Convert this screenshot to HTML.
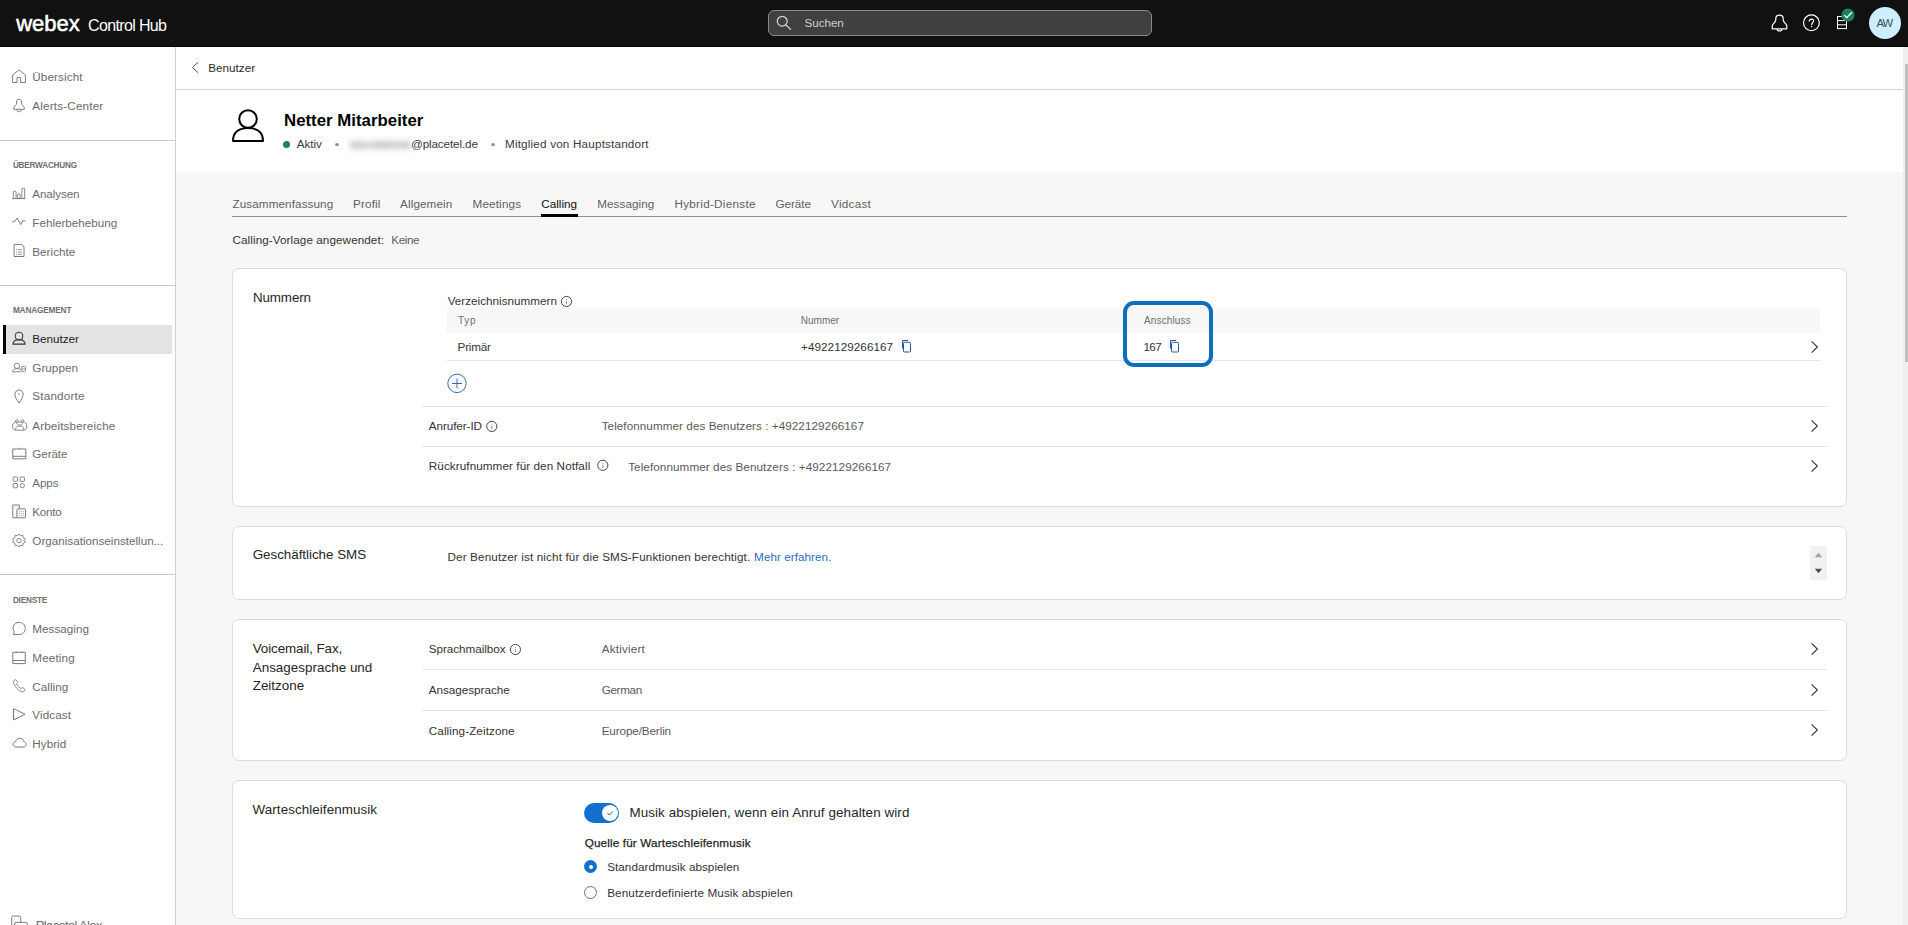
<!DOCTYPE html>
<html><head><meta charset="utf-8"><title>Webex Control Hub</title>
<style>
html,body{margin:0;padding:0;}
body{width:1908px;height:925px;overflow:hidden;position:relative;background:#f7f7f7;font-family:"Liberation Sans",sans-serif;}
.t{position:absolute;white-space:nowrap;}
.r{position:absolute;box-sizing:border-box;}
</style></head><body>
<div class="r" style="left:0px;top:0px;width:1908px;height:47px;background:#111111;"></div>
<div class="r" style="left:0px;top:46px;width:1908px;height:1px;background:#000000;"></div>
<div class="r" style="left:0px;top:47px;width:175px;height:878px;background:#ffffff;"></div>
<div class="r" style="left:175px;top:47px;width:1px;height:878px;background:#cfcfcf;"></div>
<div class="r" style="left:176px;top:47px;width:1727px;height:125px;background:#ffffff;"></div>
<div class="r" style="left:176px;top:89px;width:1727px;height:1px;background:#d4d4d4;"></div>
<div class="r" style="left:1903px;top:47px;width:5px;height:878px;background:#efefef;"></div>
<div class="r" style="left:1905px;top:64px;width:3px;height:298px;background:#c1c1c1;"></div>
<div class="t" style="left:16.24px;top:13px;font-size:22.00px;line-height:22.00px;color:#ffffff;letter-spacing:-0.011px;-webkit-text-stroke:0.55px #ffffff;">webex</div>
<div class="t" style="left:88.00px;top:18px;font-size:16.00px;line-height:16.00px;color:#ffffff;letter-spacing:-0.638px;">Control Hub</div>
<div class="r" style="left:768px;top:10px;width:384px;height:26px;background:#404040;border:1px solid #8a8a8a;border-radius:6px;"></div>
<svg class="r" style="left:775px;top:14px;" width="18" height="18" viewBox="0 0 18 18" fill="none"><circle cx="7.2" cy="7.2" r="4.9" stroke="#d8d8d8" stroke-width="1.2"/><path d="M10.8 10.8 L15.6 15.4" stroke="#d8d8d8" stroke-width="1.2" stroke-linecap="round"/></svg>
<div class="t" style="left:804.50px;top:17px;font-size:11.70px;line-height:11.70px;color:#cfcfcf;letter-spacing:-0.057px;">Suchen</div>
<svg class="r" style="left:1770px;top:13px;" width="19" height="20" viewBox="0 0 19 20" fill="none"><path d="M2.2 15.8 V12.8 C2.2 11.6 3.6 10.6 4.6 9.4 C5.4 8.4 5.8 7.6 5.8 6.4 V5.8 C5.8 3.6 7.4 2.2 9.5 2.2 C11.6 2.2 13.2 3.6 13.2 5.8 V6.4 C13.2 7.6 13.6 8.4 14.4 9.4 C15.4 10.6 16.8 11.6 16.8 12.8 V15.8 Z" stroke="#ffffff" stroke-width="1.2" stroke-linejoin="round"/><path d="M7.2 15.9 V16.4 C7.2 17.3 8.2 17.9 9.5 17.9 C10.8 17.9 11.8 17.3 11.8 16.4 V15.9" stroke="#ffffff" stroke-width="1.1"/></svg>
<svg class="r" style="left:1802px;top:14px;" width="19" height="18" viewBox="0 0 19 18" fill="none"><circle cx="9.4" cy="8.85" r="7.9" stroke="#ffffff" stroke-width="1.2"/><path d="M7.3 7.4 C7.3 6 8.2 5.2 9.5 5.2 C10.8 5.2 11.6 6 11.6 7.1 C11.6 8.6 9.6 8.9 9.6 10.7 V11.1" stroke="#ffffff" stroke-width="1.2"/><circle cx="9.6" cy="12.5" r="0.75" fill="#ffffff"/></svg>
<svg class="r" style="left:1835px;top:14px;" width="14" height="18" viewBox="0 0 14 18" fill="none"><rect x="2.5" y="2.5" width="9" height="12.1" stroke="#ffffff" stroke-width="1"/><path d="M2.5 6.6 H11.5 M2.5 10.8 H11.5" stroke="#ffffff" stroke-width="1"/></svg>
<svg class="r" style="left:1841px;top:8px;" width="14" height="14" viewBox="0 0 14 14" fill="none"><circle cx="7" cy="7" r="6.6" fill="#1d805f"/><path d="M3.2 7.1 L5.8 9.6 L10.9 4.3" stroke="#ffffff" stroke-width="1.3"/></svg>
<div class="r" style="left:1869px;top:7px;width:32px;height:32px;background:#cdeefc;border-radius:50%;"></div>
<div class="t" style="left:1876.60px;top:18px;font-size:11.20px;line-height:11.20px;color:#3b4a63;letter-spacing:-1.229px;">AW</div>
<div class="t" style="left:32.30px;top:71px;font-size:11.70px;line-height:11.70px;color:#6b6b6b;letter-spacing:0.110px;">Übersicht</div>
<svg class="r" style="left:12px;top:68px;" width="16" height="17" viewBox="0 0 16 17" fill="none"><path d="M0.6 14.5 V6.9 L6.5 2.3 H7.5 L13.4 6.9 V14.5 H8.6 V9.6 H5 V14.5 Z" stroke="#7a7a7a" stroke-width="1" stroke-linejoin="round"/></svg>
<div class="t" style="left:32.30px;top:100px;font-size:11.70px;line-height:11.70px;color:#6b6b6b;letter-spacing:0.173px;">Alerts-Center</div>
<svg class="r" style="left:12px;top:97px;" width="16" height="17" viewBox="0 0 16 17" fill="none"><path d="M1.8 12.3 V10.9 C1.8 9.7 3.6 8.7 4.3 7.5 L4.8 3.6 C4.9 2.9 5.5 2.5 6.2 2.5 H7.9 C8.6 2.5 9.2 2.9 9.3 3.6 L9.8 7.5 C10.5 8.7 12.3 9.7 12.3 10.9 V12.3 Z" stroke="#7a7a7a" stroke-width="1"/><path d="M5 12.4 V13.3 C5 14.1 5.6 14.6 6.4 14.6 H7.6 C8.4 14.6 9 14.1 9 13.3 V12.4" stroke="#7a7a7a" stroke-width="1"/></svg>
<div class="r" style="left:0px;top:140px;width:175px;height:1px;background:#c9c9c9;"></div>
<div class="t" style="left:12.90px;top:162px;font-size:8.20px;line-height:8.20px;color:#6e6e6e;letter-spacing:-0.206px;font-weight:bold;">ÜBERWACHUNG</div>
<div class="t" style="left:32.30px;top:188px;font-size:11.70px;line-height:11.70px;color:#6b6b6b;letter-spacing:-0.119px;">Analysen</div>
<svg class="r" style="left:12px;top:185px;" width="16" height="17" viewBox="0 0 16 17" fill="none"><path d="M0.3 13.6 H13.3" stroke="#7a7a7a" stroke-width="1"/><rect x="1.3" y="6.3" width="2.8" height="7.2" rx="0.6" stroke="#7a7a7a" stroke-width="0.9"/><rect x="5.6" y="8.8" width="2.5" height="4.7" rx="1.2" stroke="#7a7a7a" stroke-width="0.9"/><rect x="9.9" y="3.3" width="2.8" height="10.2" rx="0.6" stroke="#7a7a7a" stroke-width="0.9"/></svg>
<div class="t" style="left:32.30px;top:217px;font-size:11.70px;line-height:11.70px;color:#6b6b6b;letter-spacing:-0.009px;">Fehlerbehebung</div>
<svg class="r" style="left:12px;top:214px;" width="16" height="17" viewBox="0 0 16 17" fill="none"><path d="M0.3 8 L2.8 7.3 L5.1 4 L8.6 10.5 L10.9 6.9 H13.3" stroke="#7a7a7a" stroke-width="1" stroke-linejoin="round"/></svg>
<div class="t" style="left:32.30px;top:246px;font-size:11.70px;line-height:11.70px;color:#6b6b6b;letter-spacing:0.012px;">Berichte</div>
<svg class="r" style="left:12px;top:243px;" width="16" height="17" viewBox="0 0 16 17" fill="none"><path d="M2.1 1.4 H9.6 L12 3.9 V13.5 H2.1 Z" stroke="#7a7a7a" stroke-width="1" stroke-linejoin="round"/><path d="M4.1 6.6 H5 M4.1 9.1 H5 M4.1 11.4 H5 M6 6.6 H9.9 M6 9.1 H9.9 M6 11.4 H9.9" stroke="#7a7a7a" stroke-width="0.8"/></svg>
<div class="r" style="left:0px;top:285px;width:175px;height:1px;background:#c9c9c9;"></div>
<div class="t" style="left:12.90px;top:307px;font-size:8.20px;line-height:8.20px;color:#6e6e6e;letter-spacing:-0.119px;font-weight:bold;">MANAGEMENT</div>
<div class="r" style="left:6px;top:325px;width:166px;height:29px;background:#e3e3e3;"></div>
<div class="r" style="left:3px;top:325px;width:3px;height:29px;background:#000000;"></div>
<div class="t" style="left:32.30px;top:333px;font-size:11.70px;line-height:11.70px;color:#1f1f1f;letter-spacing:-0.032px;">Benutzer</div>
<svg class="r" style="left:12px;top:330px;" width="16" height="17" viewBox="0 0 16 17" fill="none"><circle cx="7" cy="6" r="3.9" stroke="#333" stroke-width="1"/><path d="M0.9 14.1 C1 11.6 3.2 9.9 5 9.9 H9 C10.8 9.9 13 11.6 13.1 14.1 Z" stroke="#333" stroke-width="1.1" stroke-linejoin="round"/></svg>
<div class="t" style="left:32.30px;top:362px;font-size:11.70px;line-height:11.70px;color:#6b6b6b;letter-spacing:0.027px;">Gruppen</div>
<svg class="r" style="left:12px;top:359px;" width="16" height="17" viewBox="0 0 16 17" fill="none"><circle cx="4.9" cy="6.8" r="2.7" stroke="#7a7a7a" stroke-width="0.9"/><path d="M0.4 12.8 C0.6 10.6 2.4 9.6 4.9 9.6 C6.6 9.6 7.8 10 8.5 10.8" stroke="#7a7a7a" stroke-width="0.9"/><path d="M0.4 12.8 H8.6" stroke="#7a7a7a" stroke-width="0.9"/><rect x="9.2" y="7.6" width="4.3" height="4.8" rx="1" stroke="#7a7a7a" stroke-width="0.9"/><path d="M9.2 10 H13.5" stroke="#7a7a7a" stroke-width="0.8"/></svg>
<div class="t" style="left:32.30px;top:390px;font-size:11.70px;line-height:11.70px;color:#6b6b6b;letter-spacing:0.184px;">Standorte</div>
<svg class="r" style="left:12px;top:387px;" width="16" height="17" viewBox="0 0 16 17" fill="none"><path d="M7 16 C4.8 12.8 2.9 10.2 2.9 7.2 C2.9 4.8 4.7 3 7 3 C9.3 3 11.1 4.8 11.1 7.2 C11.1 10.2 9.2 12.8 7 16 Z" stroke="#7a7a7a" stroke-width="1"/><circle cx="7" cy="7" r="0.8" fill="#7a7a7a"/></svg>
<div class="t" style="left:32.30px;top:420px;font-size:11.70px;line-height:11.70px;color:#6b6b6b;letter-spacing:0.129px;">Arbeitsbereiche</div>
<svg class="r" style="left:12px;top:417px;" width="16" height="17" viewBox="0 0 16 17" fill="none"><path d="M3.6 4.8 C3.6 3.2 4.2 2.6 4.9 2.6 C5.6 2.6 6.2 3.2 6.2 4.8 M9.2 4.8 C9.2 3.2 9.8 2.6 10.5 2.6 C11.2 2.6 11.8 3.2 11.8 4.8" stroke="#7a7a7a" stroke-width="0.9"/><path d="M0.5 9.5 C0.5 6.4 2 5 4.4 5 H10.9 C13.3 5 14.8 6.4 14.8 9.5 C14.8 12 13.2 13.2 11 13.2 H4.3 C2.1 13.2 0.5 12 0.5 9.5 Z" stroke="#7a7a7a" stroke-width="0.9"/><path d="M3.6 13.1 C3.6 10.6 4.6 9.1 5.8 9.1 H9.5 C10.7 9.1 11.7 10.6 11.7 13.1 M4.4 5 C4.8 7.2 6 8.1 7.65 8.1 C9.3 8.1 10.5 7.2 10.9 5" stroke="#7a7a7a" stroke-width="0.9"/></svg>
<div class="t" style="left:32.30px;top:448px;font-size:11.70px;line-height:11.70px;color:#6b6b6b;letter-spacing:-0.113px;">Geräte</div>
<svg class="r" style="left:12px;top:445px;" width="16" height="17" viewBox="0 0 16 17" fill="none"><path d="M0.8 4 H13.8 V13.8 H0.8 Z M0.8 11.3 H13.8" stroke="#7a7a7a" stroke-width="1" stroke-linejoin="round"/><path d="M7.3 2.6 V4" stroke="#7a7a7a" stroke-width="0.8"/></svg>
<div class="t" style="left:32.30px;top:477px;font-size:11.70px;line-height:11.70px;color:#6b6b6b;letter-spacing:-0.121px;">Apps</div>
<svg class="r" style="left:12px;top:474px;" width="16" height="17" viewBox="0 0 16 17" fill="none"><rect x="1.2" y="3" width="4.3" height="4.3" rx="0.6" stroke="#7a7a7a" stroke-width="0.9"/><rect x="8.1" y="3" width="4.3" height="4.3" rx="0.6" stroke="#7a7a7a" stroke-width="0.9"/><rect x="1.2" y="9.5" width="4.3" height="4.3" rx="0.6" stroke="#7a7a7a" stroke-width="0.9"/><circle cx="10.25" cy="11.65" r="2.15" stroke="#7a7a7a" stroke-width="0.9"/></svg>
<div class="t" style="left:32.30px;top:506px;font-size:11.70px;line-height:11.70px;color:#6b6b6b;letter-spacing:-0.268px;">Konto</div>
<svg class="r" style="left:12px;top:503px;" width="16" height="17" viewBox="0 0 16 17" fill="none"><path d="M4.9 14.8 H0.8 V2 H7.3 V5.9" stroke="#7a7a7a" stroke-width="1" stroke-linejoin="round"/><rect x="4.9" y="5.9" width="8.6" height="8.9" rx="0.5" stroke="#7a7a7a" stroke-width="1"/><path d="M6.8 8.4 H11.8 M6.8 10.4 H11.8 M6.8 12.4 H11.8" stroke="#7a7a7a" stroke-width="0.7" stroke-dasharray="1 1"/><path d="M2.6 4.2 H5" stroke="#7a7a7a" stroke-width="0.6" stroke-dasharray="1 1"/></svg>
<div class="t" style="left:32.30px;top:535px;font-size:11.70px;line-height:11.70px;color:#6b6b6b;letter-spacing:-0.007px;">Organisationseinstellun...</div>
<svg class="r" style="left:12px;top:532px;" width="16" height="17" viewBox="0 0 16 17" fill="none"><circle cx="7" cy="8.5" r="2.2" stroke="#7a7a7a" stroke-width="0.9"/><path d="M7 1.9 L8.5 3.8 L10.9 3.3 L11.1 5.7 L13.4 6.8 L12.1 8.5 L13.4 10.2 L11.1 11.3 L10.9 13.7 L8.5 13.2 L7 15.1 L5.5 13.2 L3.1 13.7 L2.9 11.3 L0.6 10.2 L1.9 8.5 L0.6 6.8 L2.9 5.7 L3.1 3.3 L5.5 3.8 Z" stroke="#7a7a7a" stroke-width="0.9" stroke-linejoin="round"/></svg>
<div class="r" style="left:0px;top:574px;width:175px;height:1px;background:#c9c9c9;"></div>
<div class="t" style="left:12.90px;top:597px;font-size:8.20px;line-height:8.20px;color:#6e6e6e;letter-spacing:-0.206px;font-weight:bold;">DIENSTE</div>
<div class="t" style="left:32.30px;top:623px;font-size:11.70px;line-height:11.70px;color:#6b6b6b;letter-spacing:0.015px;">Messaging</div>
<svg class="r" style="left:12px;top:620px;" width="16" height="17" viewBox="0 0 16 17" fill="none"><path d="M1.2 14.6 L2.4 12.2 C1.5 11.1 1 9.9 1 8.4 C1 4.9 3.7 2.4 7.2 2.4 C10.7 2.4 13.3 4.9 13.3 8.4 C13.3 11.9 10.7 14.6 7.2 14.6 Z" stroke="#7a7a7a" stroke-width="1" stroke-linejoin="round"/></svg>
<div class="t" style="left:32.30px;top:652px;font-size:11.70px;line-height:11.70px;color:#6b6b6b;letter-spacing:0.145px;">Meeting</div>
<svg class="r" style="left:12px;top:649px;" width="16" height="17" viewBox="0 0 16 17" fill="none"><path d="M0.8 3.3 H13.3 V14.6 H0.8 Z M0.8 11.5 H13.3" stroke="#7a7a7a" stroke-width="1" stroke-linejoin="round"/><path d="M4.2 2.2 V3.3 M9.9 2.2 V3.3" stroke="#7a7a7a" stroke-width="0.9"/></svg>
<div class="t" style="left:32.30px;top:681px;font-size:11.70px;line-height:11.70px;color:#6b6b6b;letter-spacing:0.022px;">Calling</div>
<svg class="r" style="left:12px;top:678px;" width="16" height="17" viewBox="0 0 16 17" fill="none"><path d="M2.2 2.2 C2.8 1.5 3.6 1.5 4.1 2.1 L5.4 3.8 C5.8 4.4 5.6 5 5.1 5.4 L4.6 5.8 C5.6 7.8 7 9.4 9 10.5 L9.6 10 C10 9.6 10.6 9.5 11.1 9.9 L12.6 11 C13.1 11.5 13.1 12.3 12.5 12.8 L11.8 13.4 C10.9 14 9.9 14 8.8 13.4 C5.6 11.6 3.4 9.1 1.9 5.8 C1.4 4.6 1.4 3.2 2.2 2.2 Z" stroke="#7a7a7a" stroke-width="0.9"/></svg>
<div class="t" style="left:32.30px;top:709px;font-size:11.70px;line-height:11.70px;color:#6b6b6b;letter-spacing:0.108px;">Vidcast</div>
<svg class="r" style="left:12px;top:706px;" width="16" height="17" viewBox="0 0 16 17" fill="none"><path d="M1.5 2.6 L13 8.3 L1.5 14 Z" stroke="#7a7a7a" stroke-width="1" stroke-linejoin="round"/></svg>
<div class="t" style="left:32.30px;top:738px;font-size:11.70px;line-height:11.70px;color:#6b6b6b;letter-spacing:0.037px;">Hybrid</div>
<svg class="r" style="left:12px;top:735px;" width="16" height="17" viewBox="0 0 16 17" fill="none"><path d="M4 12 C2.2 12 1 10.8 1 9.3 C1 7.8 2.2 6.8 3.6 6.7 C4 4.6 5.6 3.2 7.7 3.2 C9.8 3.2 11.4 4.6 11.8 6.6 C13.2 6.8 14.2 7.9 14.2 9.3 C14.2 10.8 13 12 11.3 12 Z" stroke="#7a7a7a" stroke-width="1"/></svg>
<svg class="r" style="left:11px;top:915px;" width="18" height="12" viewBox="0 0 18 12" fill="none"><path d="M0.7 11 V2.6 C0.7 1.7 1.3 1.1 2.2 1.1 H8.4 C9.3 1.1 9.8 1.7 9.8 2.6 V7.4" stroke="#7a7a7a" stroke-width="1"/><rect x="3.5" y="7.4" width="12.8" height="7" rx="1.6" stroke="#7a7a7a" stroke-width="1"/><path d="M3.4 4.3 H4.2 M7 4.3 H7.8" stroke="#c9a0a0" stroke-width="0.8"/></svg>
<div class="t" style="left:35.80px;top:919px;font-size:13.00px;line-height:13.00px;color:#6b6b6b;letter-spacing:-0.653px;">Placetel Alex</div>
<svg class="r" style="left:190px;top:61px;" width="10" height="13" viewBox="0 0 10 13" fill="none"><path d="M8.2 1.2 L2.4 6.5 L8.2 11.8" stroke="#555" stroke-width="1"/></svg>
<div class="t" style="left:208.30px;top:62px;font-size:11.70px;line-height:11.70px;color:#2b2b2b;">Benutzer</div>
<svg class="r" style="left:230px;top:108px;" width="36" height="36" viewBox="0 0 36 36" fill="none"><circle cx="18" cy="11" r="8.8" stroke="#000" stroke-width="2"/><path d="M3 33 C3 24.5 8.6 20 18 20 C27.4 20 33 24.5 33 33 Z" stroke="#000" stroke-width="2" stroke-linejoin="round"/></svg>
<div class="t" style="left:284.00px;top:113px;font-size:16.80px;line-height:16.80px;color:#000000;letter-spacing:0.023px;font-weight:bold;">Netter Mitarbeiter</div>
<div class="r" style="left:283px;top:141px;width:7px;height:7px;background:#1d805f;border-radius:50%;"></div>
<div class="t" style="left:296.70px;top:138px;font-size:11.70px;line-height:11.70px;color:#3a3a3a;letter-spacing:-0.013px;">Aktiv</div>
<div class="r" style="left:335px;top:143px;width:4px;height:3px;background:#8f8f8f;border-radius:50%;"></div>
<div class="r" style="left:347px;top:135px;width:64px;height:19px;overflow:hidden;background:#fdfdfd;"><div style="position:absolute;left:3px;top:6px;width:60px;height:8px;background:linear-gradient(90deg,#d2d2d2 0%,#cfcfcf 18%,#dadada 30%,#d8d8d8 38%,#c9c9c9 50%,#d0d0d0 62%,#d4d4d4 80%,#cccccc 100%);filter:blur(2.6px);"></div></div>
<div class="t" style="left:410.90px;top:138px;font-size:11.70px;line-height:11.70px;color:#3a3a3a;letter-spacing:-0.124px;">@placetel.de</div>
<div class="r" style="left:491px;top:143px;width:4px;height:3px;background:#8f8f8f;border-radius:50%;"></div>
<div class="t" style="left:505.00px;top:138px;font-size:11.70px;line-height:11.70px;color:#3a3a3a;letter-spacing:0.181px;">Mitglied von Hauptstandort</div>
<div class="t" style="left:232.50px;top:198px;font-size:11.70px;line-height:11.70px;color:#5f5f5f;letter-spacing:0.093px;">Zusammenfassung</div>
<div class="t" style="left:353.10px;top:198px;font-size:11.70px;line-height:11.70px;color:#5f5f5f;letter-spacing:0.129px;">Profil</div>
<div class="t" style="left:400.10px;top:198px;font-size:11.70px;line-height:11.70px;color:#5f5f5f;letter-spacing:0.103px;">Allgemein</div>
<div class="t" style="left:472.50px;top:198px;font-size:11.70px;line-height:11.70px;color:#5f5f5f;letter-spacing:0.160px;">Meetings</div>
<div class="t" style="left:541.30px;top:198px;font-size:11.70px;line-height:11.70px;color:#111111;letter-spacing:-0.011px;">Calling</div>
<div class="t" style="left:597.20px;top:198px;font-size:11.70px;line-height:11.70px;color:#5f5f5f;letter-spacing:0.077px;">Messaging</div>
<div class="t" style="left:674.50px;top:198px;font-size:11.70px;line-height:11.70px;color:#5f5f5f;letter-spacing:0.279px;">Hybrid-Dienste</div>
<div class="t" style="left:775.50px;top:198px;font-size:11.70px;line-height:11.70px;color:#5f5f5f;letter-spacing:-0.053px;">Geräte</div>
<div class="t" style="left:831.00px;top:198px;font-size:11.70px;line-height:11.70px;color:#5f5f5f;letter-spacing:0.291px;">Vidcast</div>
<div class="r" style="left:232px;top:216px;width:1615px;height:1px;background:#8f8f8f;"></div>
<div class="r" style="left:541px;top:214px;width:37px;height:3px;background:#000000;"></div>
<div class="t" style="left:232.50px;top:234px;font-size:11.70px;line-height:11.70px;color:#333333;letter-spacing:0.080px;">Calling-Vorlage angewendet:</div>
<div class="t" style="left:391.30px;top:234px;font-size:11.70px;line-height:11.70px;color:#5f5f5f;letter-spacing:-0.407px;">Keine</div>
<div class="r" style="left:232px;top:268px;width:1615px;height:239px;background:#ffffff;border:1px solid #dcdcdc;border-radius:7px;"></div>
<div class="r" style="left:232px;top:526px;width:1615px;height:74px;background:#ffffff;border:1px solid #dcdcdc;border-radius:7px;"></div>
<div class="r" style="left:232px;top:619px;width:1615px;height:142px;background:#ffffff;border:1px solid #dcdcdc;border-radius:7px;"></div>
<div class="r" style="left:232px;top:780px;width:1615px;height:139px;background:#ffffff;border:1px solid #dcdcdc;border-radius:7px;"></div>
<div class="t" style="left:252.90px;top:291px;font-size:13.40px;line-height:13.40px;color:#262626;letter-spacing:-0.104px;">Nummern</div>
<div class="t" style="left:447.70px;top:295px;font-size:11.70px;line-height:11.70px;color:#333333;letter-spacing:0.009px;">Verzeichnisnummern</div>
<svg class="r" style="left:560px;top:295px;" width="14" height="14" viewBox="0 0 14 14" fill="none"><circle cx="6.50" cy="6.50" r="5.1" stroke="#3c3c3c" stroke-width="0.95"/><path d="M6.50 5.80 V9.10" stroke="#777" stroke-width="0.85"/><circle cx="6.50" cy="4.40" r="0.5" fill="#777"/></svg>
<div class="r" style="left:447px;top:308px;width:1373px;height:25px;background:#f7f7f7;"></div>
<div class="t" style="left:458.00px;top:316px;font-size:10.00px;line-height:10.00px;color:#6e6e6e;letter-spacing:0.690px;">Typ</div>
<div class="t" style="left:800.80px;top:316px;font-size:10.00px;line-height:10.00px;color:#6e6e6e;letter-spacing:-0.008px;">Nummer</div>
<div class="t" style="left:1144.00px;top:316px;font-size:10.00px;line-height:10.00px;color:#6e6e6e;letter-spacing:0.140px;">Anschluss</div>
<div class="t" style="left:457.60px;top:341px;font-size:11.70px;line-height:11.70px;color:#333333;letter-spacing:-0.229px;">Primär</div>
<div class="t" style="left:801.00px;top:341px;font-size:11.70px;line-height:11.70px;color:#333333;letter-spacing:0.060px;">+4922129266167</div>
<svg class="r" style="left:900px;top:338px;" width="13" height="16" viewBox="0 0 13 16" fill="none"><path d="M2.5 10.5 V2.5 H8" stroke="#2558ab" stroke-width="1"/><rect x="3.5" y="4.3" width="7" height="9.7" rx="1" stroke="#2558ab" stroke-width="1"/></svg>
<div class="t" style="left:1143.50px;top:341px;font-size:11.70px;line-height:11.70px;color:#333333;letter-spacing:-0.658px;">167</div>
<svg class="r" style="left:1168px;top:338px;" width="13" height="16" viewBox="0 0 13 16" fill="none"><path d="M2.5 10.5 V2.5 H8" stroke="#2558ab" stroke-width="1"/><rect x="3.5" y="4.3" width="7" height="9.7" rx="1" stroke="#2558ab" stroke-width="1"/></svg>
<svg class="r" style="left:1810px;top:339.5px;" width="10" height="14" viewBox="0 0 10 14" fill="none"><path d="M1.6 1.4 L7.4 7 L1.6 12.6" stroke="#333" stroke-width="1.1"/></svg>
<div class="r" style="left:447px;top:360px;width:1373px;height:1px;background:#e4e4e4;"></div>
<svg class="r" style="left:446px;top:372px;" width="22" height="23" viewBox="0 0 22 23" fill="none"><circle cx="11" cy="11.4" r="9.2" stroke="#1a5fb0" stroke-width="0.9"/><path d="M6 11.5 H16 M11 6.5 V16.5" stroke="#1a5fb0" stroke-width="0.9"/></svg>
<div class="r" style="left:422px;top:406px;width:1405px;height:1px;background:#e4e4e4;"></div>
<div class="t" style="left:428.80px;top:420px;font-size:11.70px;line-height:11.70px;color:#333333;letter-spacing:-0.073px;">Anrufer-ID</div>
<svg class="r" style="left:485px;top:419px;" width="14" height="14" viewBox="0 0 14 14" fill="none"><circle cx="6.80" cy="7.40" r="5.1" stroke="#3c3c3c" stroke-width="0.95"/><path d="M6.80 6.70 V10.00" stroke="#777" stroke-width="0.85"/><circle cx="6.80" cy="5.30" r="0.5" fill="#777"/></svg>
<div class="t" style="left:601.70px;top:420px;font-size:11.70px;line-height:11.70px;color:#5a5a5a;letter-spacing:0.061px;">Telefonnummer des Benutzers : +4922129266167</div>
<svg class="r" style="left:1810px;top:418.5px;" width="10" height="14" viewBox="0 0 10 14" fill="none"><path d="M1.6 1.4 L7.4 7 L1.6 12.6" stroke="#333" stroke-width="1.1"/></svg>
<div class="r" style="left:422px;top:446px;width:1405px;height:1px;background:#e4e4e4;"></div>
<div class="t" style="left:428.80px;top:460px;font-size:11.70px;line-height:11.70px;color:#333333;letter-spacing:0.082px;">Rückrufnummer für den Notfall</div>
<svg class="r" style="left:596px;top:458px;" width="14" height="14" viewBox="0 0 14 14" fill="none"><circle cx="6.80" cy="7.30" r="5.1" stroke="#3c3c3c" stroke-width="0.95"/><path d="M6.80 6.60 V9.90" stroke="#777" stroke-width="0.85"/><circle cx="6.80" cy="5.20" r="0.5" fill="#777"/></svg>
<div class="t" style="left:628.20px;top:461px;font-size:11.70px;line-height:11.70px;color:#5a5a5a;letter-spacing:0.078px;">Telefonnummer des Benutzers : +4922129266167</div>
<svg class="r" style="left:1810px;top:459px;" width="10" height="14" viewBox="0 0 10 14" fill="none"><path d="M1.6 1.4 L7.4 7 L1.6 12.6" stroke="#333" stroke-width="1.1"/></svg>
<div class="r" style="left:1123px;top:301px;width:90px;height:66px;border:4px solid #0f6fbf;border-radius:11px;"></div>
<div class="t" style="left:252.70px;top:548px;font-size:13.40px;line-height:13.40px;color:#262626;letter-spacing:-0.028px;">Geschäftliche SMS</div>
<div class="t" style="left:447.50px;top:551px;font-size:11.70px;line-height:11.70px;color:#333333;letter-spacing:0.127px;">Der Benutzer ist nicht für die SMS-Funktionen berechtigt.</div>
<div class="t" style="left:754.10px;top:551px;font-size:11.70px;line-height:11.70px;color:#1f6fc2;letter-spacing:0.051px;">Mehr erfahren.</div>
<div class="r" style="left:1810px;top:546px;width:17px;height:34px;background:#f1f1f1;"></div>
<svg class="r" style="left:1814px;top:552px;" width="9" height="6" viewBox="0 0 9 6" fill="none"><path d="M0.8 5.2 L4.5 0.8 L8.2 5.2 Z" fill="#a3a3a3"/></svg>
<svg class="r" style="left:1814px;top:568px;" width="9" height="6" viewBox="0 0 9 6" fill="none"><path d="M0.8 0.8 L4.5 5.2 L8.2 0.8 Z" fill="#505050"/></svg>
<div class="t" style="left:252.70px;top:642px;font-size:13.40px;line-height:13.40px;color:#262626;letter-spacing:-0.089px;">Voicemail, Fax,</div>
<div class="t" style="left:252.70px;top:661px;font-size:13.40px;line-height:13.40px;color:#262626;letter-spacing:0.031px;">Ansagesprache und</div>
<div class="t" style="left:252.70px;top:679px;font-size:13.40px;line-height:13.40px;color:#262626;letter-spacing:0.016px;">Zeitzone</div>
<div class="t" style="left:428.80px;top:643px;font-size:11.70px;line-height:11.70px;color:#333333;letter-spacing:-0.049px;">Sprachmailbox</div>
<svg class="r" style="left:508px;top:643px;" width="14" height="14" viewBox="0 0 14 14" fill="none"><circle cx="7.40" cy="6.50" r="5.1" stroke="#3c3c3c" stroke-width="0.95"/><path d="M7.40 5.80 V9.10" stroke="#777" stroke-width="0.85"/><circle cx="7.40" cy="4.40" r="0.5" fill="#777"/></svg>
<div class="t" style="left:601.70px;top:643px;font-size:11.70px;line-height:11.70px;color:#5a5a5a;letter-spacing:0.187px;">Aktiviert</div>
<svg class="r" style="left:1810px;top:641.5px;" width="10" height="14" viewBox="0 0 10 14" fill="none"><path d="M1.6 1.4 L7.4 7 L1.6 12.6" stroke="#333" stroke-width="1.1"/></svg>
<div class="r" style="left:422px;top:669px;width:1405px;height:1px;background:#e4e4e4;"></div>
<div class="t" style="left:428.80px;top:684px;font-size:11.70px;line-height:11.70px;color:#333333;letter-spacing:-0.025px;">Ansagesprache</div>
<div class="t" style="left:601.70px;top:684px;font-size:11.70px;line-height:11.70px;color:#5a5a5a;letter-spacing:-0.332px;">German</div>
<svg class="r" style="left:1810px;top:682.5px;" width="10" height="14" viewBox="0 0 10 14" fill="none"><path d="M1.6 1.4 L7.4 7 L1.6 12.6" stroke="#333" stroke-width="1.1"/></svg>
<div class="r" style="left:422px;top:710px;width:1405px;height:1px;background:#e4e4e4;"></div>
<div class="t" style="left:428.80px;top:725px;font-size:11.70px;line-height:11.70px;color:#333333;letter-spacing:0.090px;">Calling-Zeitzone</div>
<div class="t" style="left:601.70px;top:725px;font-size:11.70px;line-height:11.70px;color:#5a5a5a;letter-spacing:-0.116px;">Europe/Berlin</div>
<svg class="r" style="left:1810px;top:723px;" width="10" height="14" viewBox="0 0 10 14" fill="none"><path d="M1.6 1.4 L7.4 7 L1.6 12.6" stroke="#333" stroke-width="1.1"/></svg>
<div class="t" style="left:252.60px;top:803px;font-size:13.40px;line-height:13.40px;color:#262626;letter-spacing:0.075px;">Warteschleifenmusik</div>
<div class="r" style="left:584px;top:803px;width:35px;height:20px;background:#1170cf;border-radius:10px;"></div>
<div class="r" style="left:602px;top:805px;width:16px;height:16px;background:#ffffff;border-radius:50%;"></div>
<svg class="r" style="left:604px;top:807px;" width="12" height="12" viewBox="0 0 12 12" fill="none"><path d="M3.4 6.2 L5.3 8 L8.8 4.4" stroke="#34405e" stroke-width="0.9"/></svg>
<div class="t" style="left:629.40px;top:806px;font-size:13.40px;line-height:13.40px;color:#262626;letter-spacing:0.104px;">Musik abspielen, wenn ein Anruf gehalten wird</div>
<div class="t" style="left:584.70px;top:837px;font-size:11.70px;line-height:11.70px;color:#1f1f1f;letter-spacing:0.155px;-webkit-text-stroke:0.25px #1f1f1f;">Quelle für Warteschleifenmusik</div>
<div class="r" style="left:584px;top:860px;width:13px;height:13px;background:#1170cf;border-radius:50%;"></div>
<div class="r" style="left:588.5px;top:864.5px;width:4px;height:4px;background:#ffffff;border-radius:50%;"></div>
<div class="t" style="left:607.20px;top:861px;font-size:11.70px;line-height:11.70px;color:#333333;letter-spacing:0.037px;">Standardmusik abspielen</div>
<div class="r" style="left:584px;top:886px;width:13px;height:13px;background:#ffffff;border:1px solid #6e6e6e;border-radius:50%;"></div>
<div class="t" style="left:607.20px;top:887px;font-size:11.70px;line-height:11.70px;color:#333333;letter-spacing:0.112px;">Benutzerdefinierte Musik abspielen</div>
</body></html>
